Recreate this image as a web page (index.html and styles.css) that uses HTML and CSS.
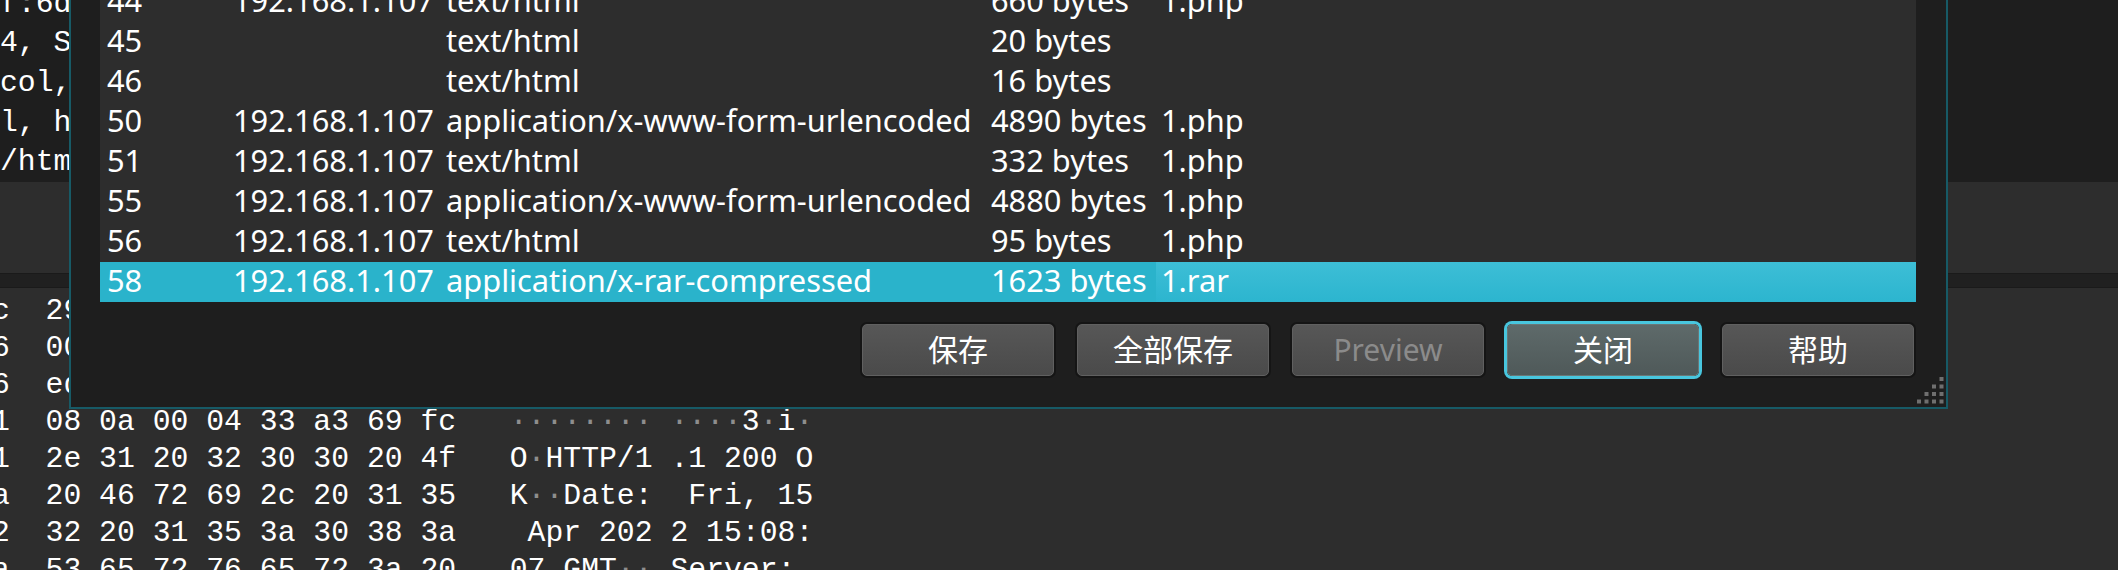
FILE: index.html
```html
<!DOCTYPE html>
<html lang="zh-CN">
<head>
<meta charset="utf-8">
<title>导出 HTTP 对象列表</title>
<link rel="stylesheet" href="styles.css">
</head>
<body>
<div class="main">
  <div class="details">
    <div class="details-lines">
      <div class="line">f:6d (00:0c:29:4f:2f:6d)</div>
      <div class="line">4, Src: 192.168.1.107, Dst: 192.168.1.1</div>
      <div class="line">col, Src Port: 80, Dst Port: 49974</div>
      <div class="line">l, http://192.168.1.107/1.rar</div>
      <div class="line">/html</div>
    </div>
  </div>
  <div class="blank-pane"></div>
  <div class="splitter"></div>
  <div class="bytes">
    <div class="hex-lines">
      <div class="line">c  29 4f 2f 6d 08 00 45 00   <span class="np">·</span>PV<span class="np">·····</span> )O/m<span class="np">··</span>E<span class="np">·</span></div>
      <div class="line">6  00 00 c0 a8 01 6b c0 a8   <span class="np">··</span>&gt;^@<span class="np">·</span>@<span class="np">·</span> <span class="np">·····</span>k<span class="np">··</span></div>
      <div class="line">6  ed 4c 7b 2e 80 18 01 f6   <span class="np">···</span>P<span class="np">·</span>V<span class="np">··</span> <span class="np">·</span>L{<span class="np">·····</span></div>
      <div class="line">1  08 0a 00 04 33 a3 69 fc   <span class="np">········</span> <span class="np">····</span>3<span class="np">·</span>i<span class="np">·</span></div>
      <div class="line">1  2e 31 20 32 30 30 20 4f   O<span class="np">·</span>HTTP/1 .1 200 O</div>
      <div class="line">a  20 46 72 69 2c 20 31 35   K<span class="np">··</span>Date:  Fri, 15</div>
      <div class="line">2  32 20 31 35 3a 30 38 3a    Apr 202 2 15:08:</div>
      <div class="line">a  53 65 72 76 65 72 3a 20   07 GMT<span class="np">··</span> Server: </div>
    </div>
  </div>
</div>

<div class="dialog">
  <div class="object-list">
    <div class="row"><div class="cell c1">44</div><div class="cell">192.168.1.107</div><div class="cell">text/html</div><div class="cell">660 bytes</div><div class="cell last">1.php</div></div>
    <div class="row"><div class="cell c1">45</div><div class="cell"></div><div class="cell">text/html</div><div class="cell">20 bytes</div><div class="cell last"></div></div>
    <div class="row"><div class="cell c1">46</div><div class="cell"></div><div class="cell">text/html</div><div class="cell">16 bytes</div><div class="cell last"></div></div>
    <div class="row"><div class="cell c1">50</div><div class="cell">192.168.1.107</div><div class="cell">application/x-www-form-urlencoded</div><div class="cell">4890 bytes</div><div class="cell last">1.php</div></div>
    <div class="row"><div class="cell c1">51</div><div class="cell">192.168.1.107</div><div class="cell">text/html</div><div class="cell">332 bytes</div><div class="cell last">1.php</div></div>
    <div class="row"><div class="cell c1">55</div><div class="cell">192.168.1.107</div><div class="cell">application/x-www-form-urlencoded</div><div class="cell">4880 bytes</div><div class="cell last">1.php</div></div>
    <div class="row"><div class="cell c1">56</div><div class="cell">192.168.1.107</div><div class="cell">text/html</div><div class="cell">95 bytes</div><div class="cell last">1.php</div></div>
    <div class="row selected"><div class="cell c1">58</div><div class="cell">192.168.1.107</div><div class="cell">application/x-rar-compressed</div><div class="cell">1623 bytes</div><div class="cell last">1.rar</div></div>
  </div>
  <div class="button-bar">
    <button class="btn">保存</button>
    <button class="btn">全部保存</button>
    <button class="btn" disabled>Preview</button>
    <button class="btn focused">关闭</button>
    <button class="btn">帮助</button>
  </div>
  <svg class="grip" width="28" height="28" viewBox="0 0 28 28" aria-hidden="true">
    <g fill="#6f6f6f">
      <rect x="23.5" y="1" width="4" height="4"/>
      <rect x="16" y="8.5" width="4" height="4"/>
      <rect x="23.5" y="8.5" width="4" height="4"/>
      <rect x="8.5" y="16" width="4" height="4"/>
      <rect x="16" y="16" width="4" height="4"/>
      <rect x="23.5" y="16" width="4" height="4"/>
      <rect x="1" y="23.5" width="4" height="4"/>
      <rect x="8.5" y="23.5" width="4" height="4"/>
      <rect x="16" y="23.5" width="4" height="4"/>
      <rect x="23.5" y="23.5" width="4" height="4"/>
    </g>
  </svg>
</div>
</body>
</html>
```

FILE: styles.css
```css
html, body {
  margin: 0;
  padding: 0;
}

body {
  width: 2118px;
  height: 570px;
  overflow: hidden;
  position: relative;
  background: #2d2d2d;
  color: #ffffff;
  font-family: "Noto Sans", "Noto Sans CJK SC", sans-serif;
}

.main {
  display: flex;
  flex-direction: column;
  height: 570px;
}

.details {
  flex: none;
  height: 182px;
  overflow: hidden;
  background: #1e1e1e;
  font-family: "Liberation Mono", "DejaVu Sans Mono", monospace;
  font-size: 29.75px;
  line-height: 39.7px;
}

.details-lines {
  margin-top: -15.5px;
}

.line {
  white-space: pre;
}

.blank-pane {
  flex: none;
  height: 91px;
  background: #2d2d2d;
}

.splitter {
  flex: none;
  height: 15px;
  box-sizing: border-box;
  background: #202020;
  border-top: 1px solid #1a1a1a;
  border-bottom: 1px solid #1a1a1a;
}

.bytes {
  flex: 1;
  overflow: hidden;
  background: #2d2d2d;
  padding-top: 5px;
  font-family: "Liberation Mono", "DejaVu Sans Mono", monospace;
  font-size: 29.75px;
  line-height: 37px;
}

.hex-lines {
  margin-left: -8px;
}

.np {
  color: #8e8e8e;
}

/* dialog window */
.dialog {
  position: absolute;
  left: 69px;
  top: -20px;
  width: 1879px;
  height: 429px;
  box-sizing: border-box;
  border: 2px solid #175a66;
  background: #1e1e1e;
  padding: 0 30px 0 29px;
  display: flex;
  flex-direction: column;
}

.object-list {
  background: #2d2d2d;
  display: flex;
  flex-direction: column;
}

.row {
  display: grid;
  grid-template-columns: 128px 213px 545px 170px 1fr;
  height: 40px;
  font-size: 30.8px;
  line-height: 36px;
  white-space: nowrap;
}

.cell {
  padding-left: 5px;
  overflow: hidden;
}

.cell.c1 {
  padding-left: 7px;
}

.row.selected {
  background: #2ab3cb;
}

.row.selected .cell.last {
  background: linear-gradient(#3dbed6, #2cb5cf);
}

.button-bar {
  display: flex;
  justify-content: flex-end;
  gap: 23px;
  margin-top: 22px;
  padding-right: 2px;
}

.btn {
  width: 192px;
  height: 52px;
  box-sizing: border-box;
  border: 1px solid #606060;
  border-radius: 5px;
  background: linear-gradient(#575757, #4a4a4a);
  box-shadow: 0 0 0 2px #151515;
  color: #ffffff;
  font-family: "Noto Sans", "Noto Sans CJK SC", sans-serif;
  font-size: 30px;
  line-height: 1;
  padding: 0;
}

.btn:disabled {
  color: #8b8b8b;
}

.btn.focused {
  border-color: #6a7777;
  background: linear-gradient(#5e6a6a, #4f5959);
  box-shadow: 0 0 0 3px #48c6de;
}

.grip {
  position: absolute;
  right: 2px;
  bottom: 3px;
}
```
